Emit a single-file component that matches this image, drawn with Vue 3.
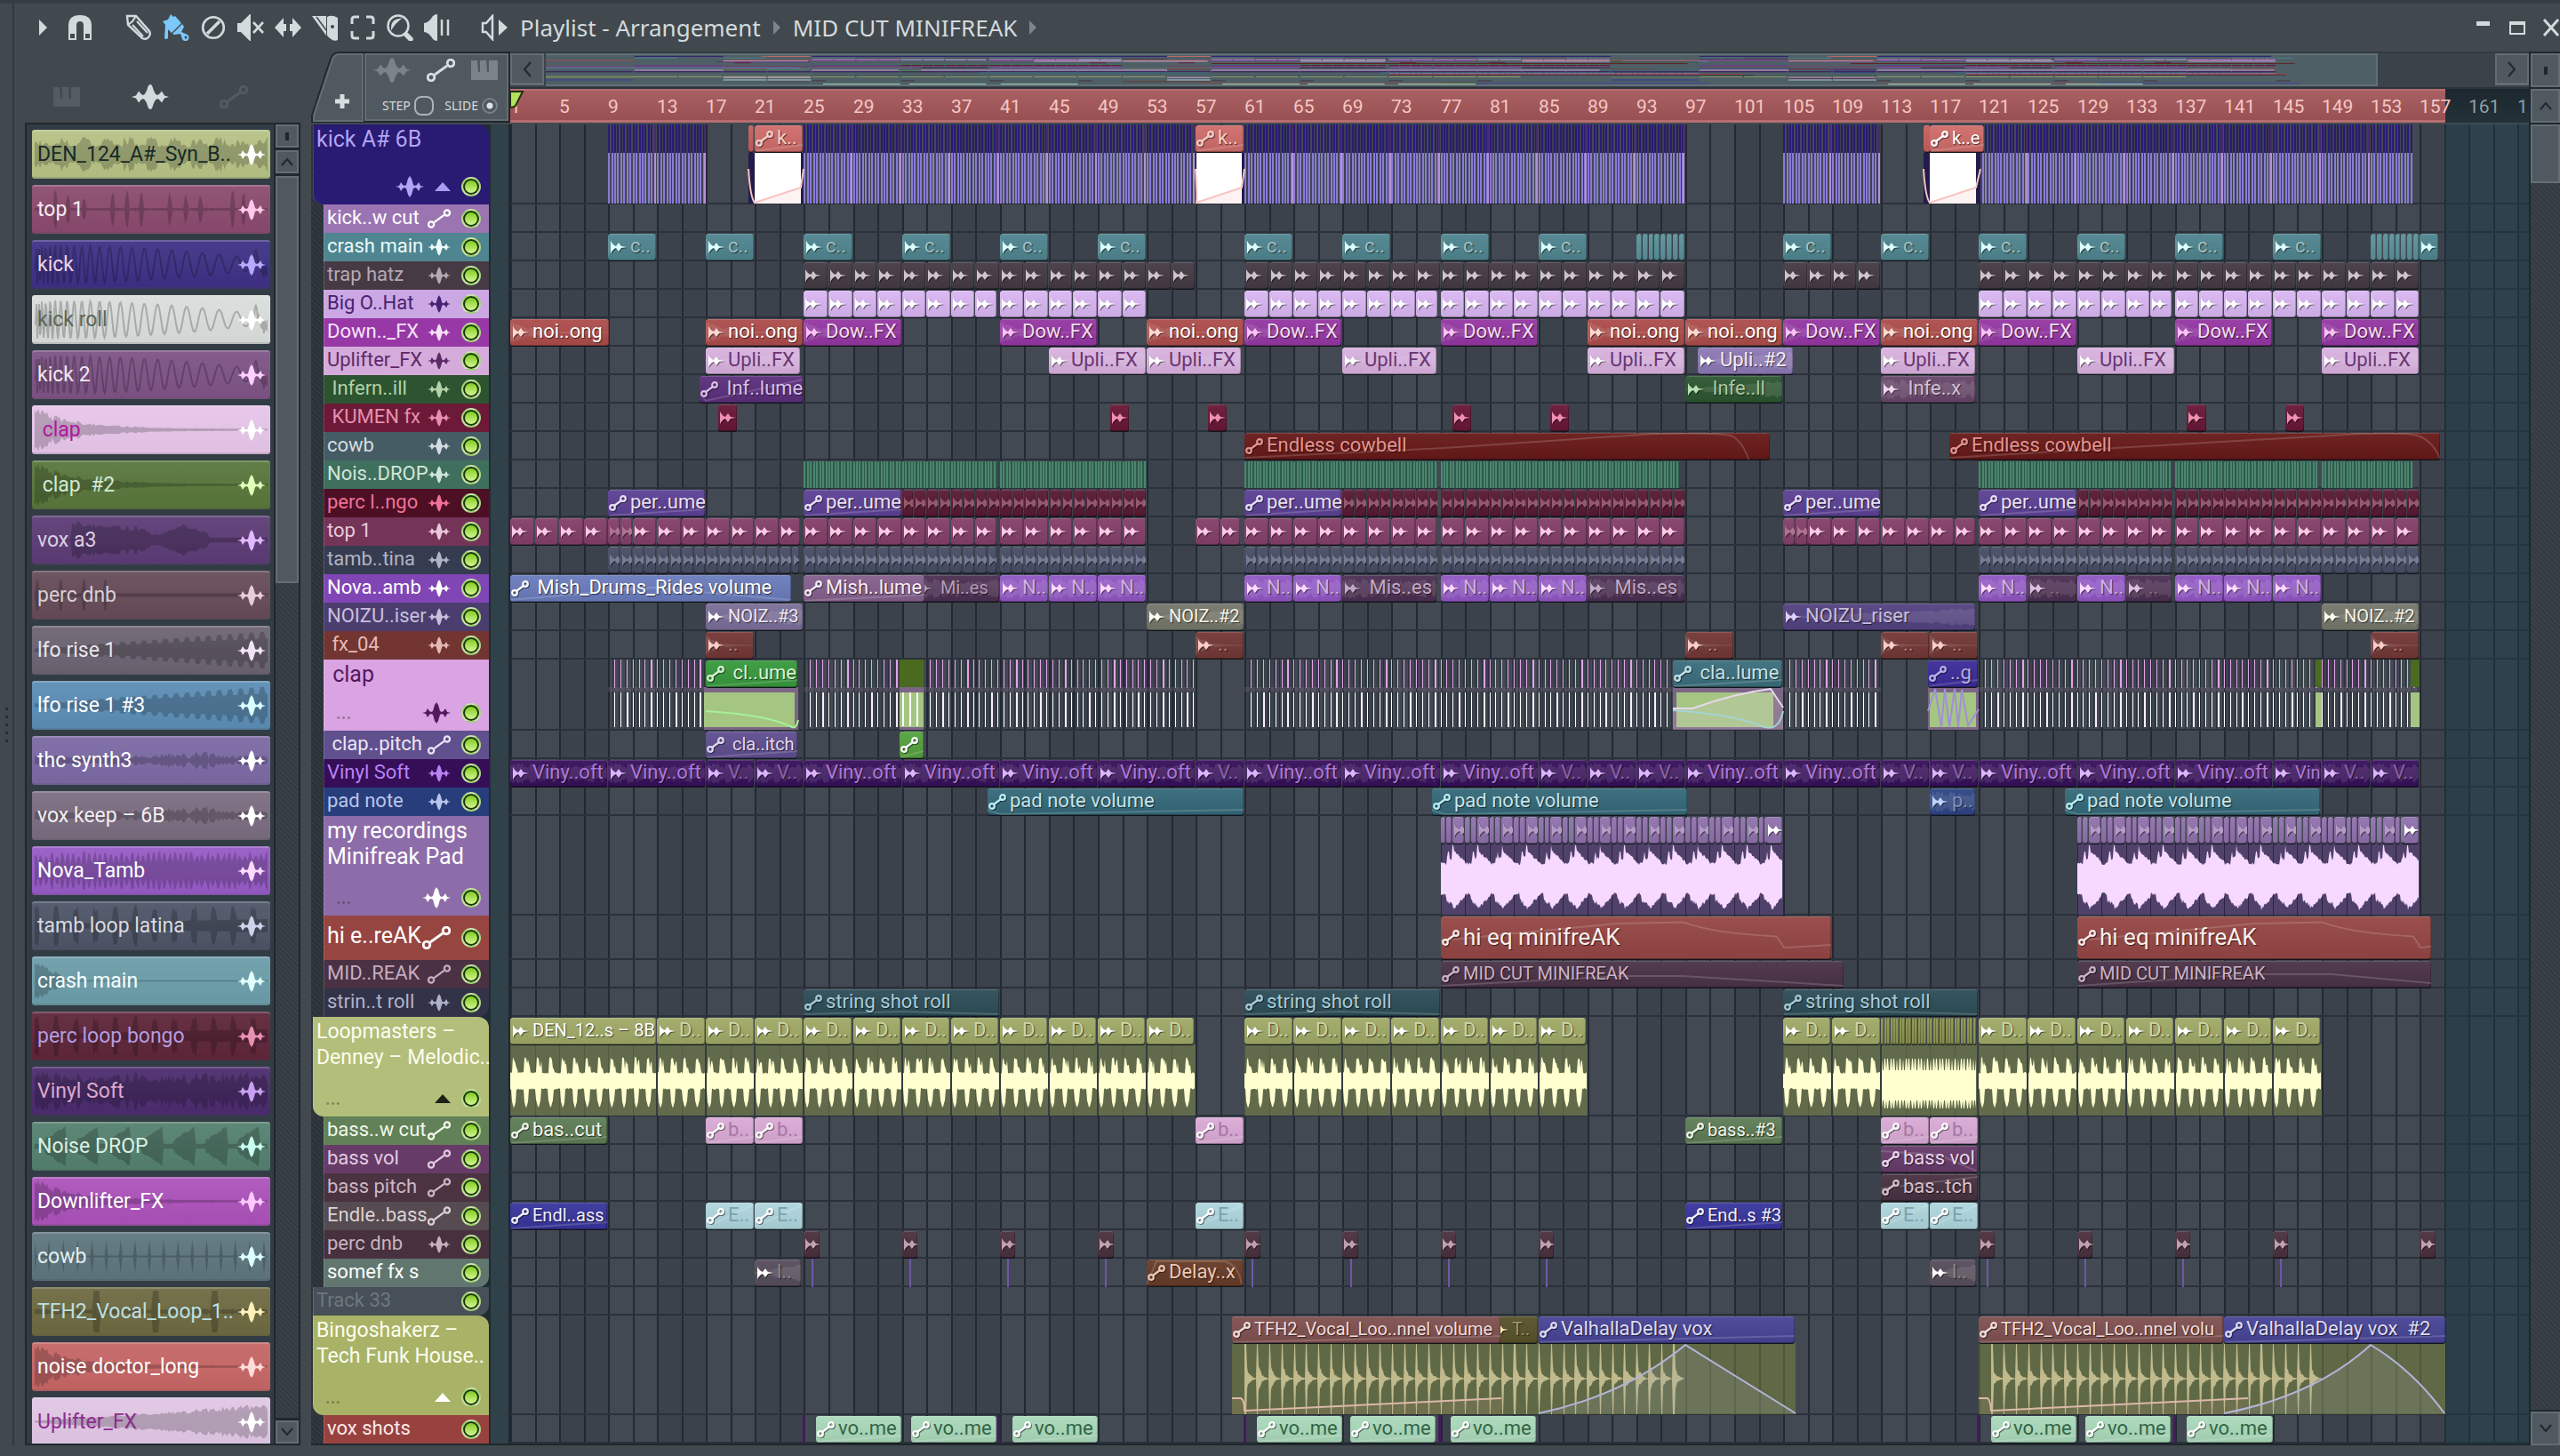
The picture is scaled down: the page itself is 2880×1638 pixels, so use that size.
<script setup>
const BAR = 13.77
const x = (bar) => Math.round((bar - 1) * BAR)
const rand = (n) => {
  const v = Math.sin(n * 127.1 + 11.7) * 43758.5453
  return v - Math.floor(v)
}

/* ---------- waveform helpers ---------- */
function envelope(width, mid, up, down, step = 2) {
  const top = []
  const bottom = []
  for (let i = 0; i <= width; i += step) {
    top.push(`${i} ${(mid - up(i / width, i)).toFixed(1)}`)
    bottom.unshift(`${i} ${(mid + down(i / width, i)).toFixed(1)}`)
  }
  return `M${top.join('L')}L${bottom.join('L')}Z`
}
const shapes = {
  loop: (t, i) => (i % 25 < 13 ? 22 - rand(i) * 12 : 8 + rand(i) * 5),
  spikes: (t, i) => ([22, 36, 54, 86, 102, 118, 150, 168, 184, 220, 232].some((s) => i >= s && i < s + 4) ? 10 + rand(i) * 14 : 1 + rand(i)),
  decay: (t, i) => 24 * Math.exp(-t * 5) * (0.5 + rand(i) * 0.6) + 1,
  short: (t, i) => (t < 0.13 ? 22 * (1 - t * 6) * (0.6 + rand(i) * 0.5) : 0.7),
  grow: (t, i) => 1 + t * 20 * (0.65 + rand(i) * 0.4),
  rise: (t, i) => 2 + t * 17 * (0.7 + (i % 12 < 6 ? 0.5 : 0)),
  vox: (t, i) => (t < 0.16 ? 0.5 : t < 0.5 ? 14 * (1.5 - t * 2) + rand(i) * 8 : t < 0.75 ? Math.max(5, 16 - Math.abs(t - 0.64) * 110) + rand(i) * 4 : 3),
  thin: (t, i) => 2 + rand(i) * (t > 0.5 && t < 0.8 ? 9 : 4),
  noise: (t, i) => 8 + rand(i) * 15,
  dense: (t, i) => (i % 6 < 3 ? 24 - rand(i) * 9 : 6 + 6 * t),
  drums: (t, i) => (i % 22 < 5 ? 16 + rand(i) * 9 : 2 + t * 6),
  blobs: (t, i) => (i % 36 > 10 ? 5 + (i % 36 - 10) * 0.7 + rand(i) * 3 : 3),
  ticks: (t, i) => (i % 16 < 2 ? 20 : 1),
  hits: (t, i) => (i % 66 < 8 && i > 8 ? 25 : 1.5 + rand(i) * 2),
  few: (t, i) => ([2, 28, 54, 78].some((s) => i >= s && i < s + 4) ? 18 : 2),
}
function chirp(width) {
  let d = 'M0 27'
  for (let i = 0; i <= width; i += 1) {
    const t = i / width
    const a = t > 0.93 ? 22 * rand(i) : 23 - t * t * 18
    d += `L${i} ${(27 - a * Math.sin(180 * Math.pow(t + 0.02, 0.42))).toFixed(1)}`
  }
  return d
}

/* ---------- sample picker ---------- */
const nb = '\u00a0'
const samples = [
  ['DEN_124_A#_Syn_B..', '#b6c184', '#182a28', '#ffffff', 'loop'],
  ['top 1', '#8a4a6d', '#f6ecf2', '#ffc8ec', 'spikes'],
  ['kick', '#3d3085', '#ecd4e4', '#b8a8ff', 'sine'],
  ['kick roll', '#d9dddb', '#5c6658', '#ffffff', 'sine'],
  ['kick 2', '#7d5385', '#f2e6f2', '#ffd0ff', 'sine'],
  [nb + 'clap', '#e6c5e9', '#b0189c', '#ffffff', 'decay'],
  [nb + 'clap' + nb + nb + '#2', '#58763b', '#d2ead4', '#e0ffb8', 'decay'],
  ['vox a3', '#5b3b75', '#dccfe4', '#e0b8ff', 'vox'],
  ['perc dnb', '#654b57', '#dacfd3', '#e8ccd8', 'few'],
  ['lfo rise 1', '#6b6371', '#eae6ea', '#f0e4f4', 'rise'],
  ['lfo rise 1 #3', '#5b8cb4', '#ffffff', '#d8ffff', 'rise'],
  ['thc synth3', '#7b69a3', '#ffffff', '#ffffff', 'thin'],
  ['vox keep – 6B', '#7a6c80', '#f2eef2', '#ffffff', 'thin'],
  ['Nova_Tamb', '#955ac5', '#ffffff', '#ffd8ff', 'dense'],
  ['tamb loop latina', '#4d5467', '#dadade', '#ccd4ec', 'drums'],
  ['crash main', '#6b9da9', '#f6ffff', '#e0ffff', 'short'],
  ['perc loop bongo', '#5e2539', '#b49ce0', '#e890b0', 'drums'],
  ['Vinyl Soft', '#4b2b6d', '#dca8cc', '#c8a0f0', 'noise'],
  ['Noise DROP', '#53806f', '#dcf0e0', '#c8fff0', 'blobs'],
  ['Downlifter_FX', '#ab51b9', '#ffffff', '#ffc8ff', 'decay'],
  ['cowb', '#5d757d', '#e2f0f2', '#dcffff', 'ticks'],
  ['TFH2_Vocal_Loop_1..', '#6d6941', '#bce0e4', '#fff0b8', 'hits'],
  ['noise doctor_long', '#c56565', '#ffffff', '#ffdcd8', 'decay'],
  ['Uplifter_FX', '#e0c6e4', '#8c2c8e', '#ffffff', 'grow'],
].map(([name, bg, fg, icon, shape]) => ({
  name, bg, fg, icon,
  line: shape === 'sine',
  wave: shape === 'sine' ? chirp(260) : envelope(260, 27, shapes[shape], shapes[shape]),
}))

/* ---------- clips ---------- */
const clip = (kind, from, to, label, bg, fg, extra = {}) => ({ kind, from, to, label, bg, fg, ...extra })
const auto = (...a) => clip('auto', ...a)
const wav = (...a) => clip('wave', ...a)
const at = (starts, len, make) => starts.map((s) => make(s, s + len))
function slices(ranges, step, bg, fg, kind = 'wave') {
  const out = []
  for (const [a, b] of ranges) {
    for (let s = a; s < b - 0.3; s += step) out.push(clip(kind, s, Math.min(s + step, b), '', bg, fg, { tight: true }))
  }
  return out
}
function bars(ranges, step, w, y, h, shift = 0) {
  let d = ''
  for (const [a, b] of ranges) for (let s = a + shift; s < b - 0.05; s += step) d += `M${x(s)} ${y}h${w}v${h}h-${w}z`
  return d
}
const box = (ranges, y, h) => ranges.map(([a, b]) => `M${x(a)} ${y}H${x(b)}v${h}H${x(a)}z`).join('')
function bodyWave(ranges, period, mid, up, down) {
  return ranges.map(([a, b]) => {
    const top = []
    const low = []
    const x0 = x(a)
    const x1 = x(b) - 1
    for (let i = x0; i <= x1; i++) {
      const p = (((i - x0) / BAR) % period) / period
      top.push(`${i} ${(mid - up(p, i)).toFixed(1)}`)
      low.unshift(`${i} ${(mid + down(p, i)).toFixed(1)}`)
    }
    return `M${top.join('L')}L${low.join('L')}Z`
  }).join('')
}

const kickRanges = [[9, 17], [25, 57], [61, 97], [105, 113], [121, 156.5]]
const clapRanges = [[9, 17], [25, 32.8], [34.8, 57], [61, 96], [105, 113], [121, 156.8]]
const loopRanges = [[1, 13], ...at([13, 17, 21, 25, 29, 33, 37, 41, 45, 49, 53, 61, 65, 69, 73, 77, 81, 85, 105, 109], 4, (a, b) => [a, b]),
  ...at([121, 125, 129, 133, 137, 141, 145], 4, (a, b) => [a, b])]
const recRanges = [[77, 105], [129, 157]]
const whiteBox = (a, b, left, right) => [
  { d: box([[a, b]], 32, 57), fill: '#241b4c' },
  { d: box([[left, right]], 32, 57), fill: '#ffffff' },
  { d: `M${x(left)} 88L${x(right)} 71V89H${x(left)}z`, fill: '#fdf3f2' },
  { d: `M${x(a)} 50Q${x(a) + 2} 82 ${x(left)} 88L${x(right)} 71L${x(b)} 50`, stroke: '#f6c4c0' },
]
const recSlices = () => {
  const out = []
  for (const [a, b] of recRanges) {
    for (let s = a; s < b; s += 2) {
      out.push(clip('plain', s, s + 0.5, '', '#9072ad', '#c0a6d2', { tight: true }))
      out.push(clip('plain', s + 0.5, s + 1, '', '#9072ad', '#c0a6d2', { tight: true }))
      out.push(wav(s + 1 - (s + 2 >= b ? 0.4 : 0), s + 2, '', '#9072ad', s + 2 >= b ? '#ffffff' : '#b49cc6', { tight: true }))
    }
  }
  return out
}

const RED = '#ad4d4b'
const MAG = '#9537a3'
const LIL = '#d9b2e0'
const snug = true
const tracks = [
  {
    name: 'kick A# 6B', h: 90, bg: '#291a73', fg: '#b0a4f4', icon: 'wave', group: true, arrow: '#a89cf0', big: true, roomy: true,
    art: [
      { d: bars(kickRanges, 0.25, 2, 0, 32), fill: '#2a1a74' },
      { d: bars(kickRanges, 0.25, 2, 32, 57), fill: '#8a7bd6' },
      { d: bars(kickRanges, 4, 2, 0, 32, 3.8), fill: '#48296e' },
      { d: bars(kickRanges, 4, 2, 32, 57, 3.8), fill: '#b690d4' },
      ...whiteBox(20.45, 24.95, 20.94, 24.75),
      ...whiteBox(57, 61, 57.1, 60.8),
      ...whiteBox(116.5, 121.1, 117, 120.75),
    ],
    mini: kickRanges,
    clips: [
      clip('plain', 20.45, 21, '', '#c75f5f', '#fff', { tight: true }),
      auto(20.94, 24.95, 'k..', '#cf6c6a', '#f6cfc8'),
      auto(57, 61, 'k..', '#cf6c6a', '#f6cfc8'),
      clip('plain', 116.5, 117.1, '', '#c75f5f', '#fff', { tight: true }),
      auto(117, 121.5, 'k..e', '#cf6c6a', '#ffffff', { snug }),
    ],
  },
  { name: 'kick..w cut', bg: '#9b74b2', fg: '#fff', icon: 'auto', clips: [] },
  {
    name: 'crash main', bg: '#4f8590', fg: '#ecfafa', icon: 'wave',
    clips: [
      ...at([9, 17, 25, 33, 41, 49, 61, 69, 77, 85, 105, 113, 121, 129, 137, 145], 4, (a, b) => wav(a, b, 'c..', '#4f858f', '#a2c0c4', { ic: '#dcffff', wave: 'short' })),
      ...slices([[93, 97], [153, 157]], 0.5, '#5b919a', '#fff', 'plain'),
      wav(157, 158.6, '', '#4f858f', '#dcffff', { tight: true }),
    ],
  },
  { name: 'trap hatz', bg: '#463b45', fg: '#b5a9b4', icon: 'wave', clips: slices([[25, 57], [61, 97], [105, 113], [121, 157]], 2, '#443a44', '#cfc4ce') },
  { name: 'Big O..Hat', bg: '#cba7e3', fg: '#482272', icon: 'wave', clips: slices([[25, 40.8], [41, 53], [61, 76.8], [77, 97], [121, 136.8], [137, 157]], 2, '#dab7f3', '#ffffff') },
  {
    name: 'Down.._FX', bg: '#9838a6', fg: '#f6e2f8', icon: 'wave',
    clips: [
      wav(1, 9.1, 'noi..ong', RED, '#ffffff', { ic: '#ffd8d0', wave: 'decay' }),
      ...at([17, 53, 89, 97, 113], 8, (a, b) => wav(a, b, 'noi..ong', RED, '#ffffff', { ic: '#ffd8d0', wave: 'decay' })),
      ...at([25, 41, 61, 77, 105, 121, 137, 149], 8, (a, b) => wav(a, b, 'Dow..FX', MAG, '#f2dcf4', { ic: '#ffc0f8', wave: 'decay' })),
    ],
  },
  {
    name: 'Uplifter_FX', bg: '#d5abdb', fg: '#5d2a68', icon: 'wave',
    clips: [
      ...at([17, 53, 69, 113], 7.75, (a, b) => wav(a, b, 'Upli..FX', LIL, '#6a3572', { ic: '#fff', wave: 'grow', flat: true })),
      ...at([45, 89, 129, 149], 8, (a, b) => wav(a, b, 'Upli..FX', LIL, '#6a3572', { ic: '#fff', wave: 'grow', flat: true })),
      wav(98, 105.9, 'Upli..#2', '#8d79b5', '#f2ecfa', { ic: '#fff', wave: 'grow' }),
    ],
  },
  {
    name: nb + 'Infern..ill', bg: '#2c5430', fg: '#b4d2a8', icon: 'wave',
    clips: [
      auto(16.45, 24.95, nb + 'Inf..lume', '#5b2f7c', '#d8c0ec', { curve: 'M1 20L6 28L100 4' }),
      wav(97, 105, nb + 'Infe..ll', '#2c5630', '#a8c8a0', { ic: '#b8e0b0', wave: 'grow' }),
      wav(113, 120.75, nb + 'Infe..x', '#67466a', '#d4c0d6', { ic: '#f0d8f0', wave: 'noise' }),
    ],
  },
  { name: nb + 'KUMEN fx', bg: '#6d1a39', fg: '#e68fae', icon: 'wave', clips: at([18, 50, 58, 78, 86, 138, 146], 1.6, (a, b) => wav(a, b, '', '#681736', '#f090b0', { tight: true })) },
  {
    name: 'cowb', bg: '#465c65', fg: '#d4dee2', icon: 'wave',
    clips: [
      auto(61, 104, 'Endless cowbell', '#671918', '#e49490', { curve: 'M0 28L38 17L78 1Q91 -1 93 4Q95 12 96 30' }),
      auto(118.6, 158.7, 'Endless cowbell', '#671918', '#e49490', { curve: 'M0 28L40 15L84 1Q94 -1 96 4Q99 12 100 30' }),
    ],
  },
  {
    name: 'Nois..DROP', bg: '#3f6f5d', fg: '#cfe6da', icon: 'wave', clips: [],
    art: [
      { d: box([[25, 40.8], [41, 53], [61, 76.8], [77, 96.5], [121, 136.7], [137, 148.7], [149, 156.4]], 1, 30), fill: '#2e5848' },
      { d: bars([[25, 40.8], [41, 53], [61, 76.8], [77, 96.5], [121, 136.7], [137, 148.7], [149, 156.4]], 0.25, 2, 1, 30), fill: '#4c8670' },
    ],
    mini: [[25, 40.8], [41, 53], [61, 76.8], [77, 96.5], [121, 136.7], [137, 148.7], [149, 156.4]],
  },
  {
    name: 'perc l..ngo', bg: '#4d0f24', fg: '#f07299', icon: 'wave',
    clips: [
      ...at([9, 25, 61, 105, 121], 8, (a, b) => auto(a, b, 'per..ume', '#5c4195', '#e8e0f6')),
      ...slices([[33, 53], [69, 76.8], [77, 97], [129, 136.8], [137, 157]], 1, '#581a33', '#94596d'),
    ],
  },
  {
    name: 'top 1', bg: '#743457', fg: '#ecc8da', icon: 'wave',
    clips: [
      ...slices([[9, 11], [105, 107]], 1, '#84406a', '#ae7292'),
      ...slices([[1, 9], [11, 24.75], [25, 40.8], [41, 53], [57, 60.7], [61, 76.75], [77, 97], [107, 120.75], [121, 136.8], [137, 157]], 2, '#843f69', '#ffc8e6'),
    ],
  },
  { name: 'tamb..tina', bg: '#363c50', fg: '#b0b4c6', icon: 'wave', clips: slices([[9, 24.7], [25, 40.8], [41, 53], [61, 76.8], [77, 97], [121, 136.8], [137, 157]], 1, '#474d64', '#747d94') },
  {
    name: 'Nova..amb', bg: '#8146b5', fg: '#ffffff', icon: 'wave',
    clips: [
      auto(1, 24, nb + 'Mish_Drums_Rides volume', '#6a7cbd', '#ffffff', { curve: 'M0 28L50 14L100 28' }),
      wav(34, 41, nb + 'Mi..es', '#4b2f52', '#b49abc', { wave: 'noise', snug }),
      auto(25, 34.9, 'Mish..lume', '#84608d', '#f6ecf6'),
      ...at([41, 45, 49, 61, 65, 77, 81, 85, 121, 129, 137, 141, 145], 4, (a, b) => wav(a, b, 'N..', '#9156c5', '#ceb0e2', { ic: '#ffd8ff', wave: 'noise' })),
      wav(69, 76.75, nb + 'Mis..es', '#4b2f52', '#c2a8c8', { wave: 'noise' }),
      wav(89, 97, nb + 'Mis..es', '#4b2f52', '#c2a8c8', { wave: 'noise' }),
      wav(125, 129, '..', '#4b2f52', '#8a6a90', { ic: '#e0c0e0', wave: 'noise' }),
      wav(133, 136.8, '..', '#4b2f52', '#8a6a90', { ic: '#e0c0e0', wave: 'noise' }),
    ],
  },
  {
    name: 'NOIZU..iser', bg: '#4b3e6f', fg: '#c8bfdc', icon: 'wave',
    clips: [
      wav(17, 25, 'NOIZ..#3', '#7b6e99', '#efe8f8', { ic: '#fff', wave: 'grow', snug }),
      ...at([53, 149], 8, (a, b) => wav(a, b, 'NOIZ..#2', '#75776b', '#f4f4e8', { ic: '#fffff0', wave: 'grow', snug })),
      wav(105, 120.75, 'NOIZU_riser', '#534280', '#c8bede', { ic: '#e0d0ff', wave: 'grow' }),
    ],
  },
  { name: nb + 'fx_04', bg: '#723532', fg: '#e6bab4', icon: 'wave', clips: at([17, 57, 97, 113, 117, 153], 4, (a, b) => wav(a, b, '..', '#733735', '#b08480', { ic: '#ffccc8', wave: 'decay' })) },
  {
    name: nb + 'clap', h: 80, bg: '#daa3e2', fg: '#54185e', icon: 'wave', big: true, roomy: true, dots: true,
    art: [
      { d: bars(clapRanges, 0.5, 1, 0, 79, 0.35), fill: '#2b313a' },
      { d: bars(clapRanges, 0.5, 1, 0, 32, 0.5), fill: '#e2a4e8' },
      { d: bars(clapRanges, 0.5, 1, 37, 39, 0.5), fill: '#ffffff' },
      { d: bars(clapRanges, 4, 2, 0, 32, 3.5), fill: '#e2a4e8' },
      { d: bars(clapRanges, 4, 2, 37, 39, 3.5), fill: '#ffffff' },
      { d: bars(clapRanges, 2, 2, 37, 39, 1.5), fill: '#f8eefa' },
      { d: box(clapRanges, 31, 5), fill: '#7c66854d' },
      { d: box([[16.8, 24.5], [32.8, 34.8], [96, 105], [116.8, 121]], 31, 48), fill: '#7c6685' },
      { d: box([[148.5, 149], [156.3, 157], [32.8, 34.8]], 0, 31), fill: '#4a6a1f' },
      { d: box([[16.8, 24.25], [32.8, 34.8], [96.3, 104.2], [117, 120.75], [148.5, 149], [156.3, 157]], 37, 39), fill: '#a5c583' },
      { d: bars([[33, 34.7]], 0.6, 2, 37, 38), fill: '#ffffff' },
      { d: `M${x(17)} 58Q${x(22)} 62 ${x(24)} 76Q${x(24.4)} 78 ${x(24.5)} 68`, stroke: '#a8f098' },
      { d: `M${x(96)} 55H${x(97.6)}Q${x(101)} 38 ${x(104)} 33L${x(105)} 54V78H${x(96)}z`, fill: '#e8d0e833' },
      { d: `M${x(96)} 55H${x(97.6)}Q${x(101)} 38 ${x(104)} 33L${x(105)} 54`, stroke: '#e8d8ea' },
      { d: `M${x(96)} 57Q${x(101)} 62 ${x(103)} 74Q${x(104.6)} 84 ${x(105)} 58`, stroke: '#a4d4d0' },
      { d: `M${x(116.8)} 58L${x(117.4)} 33L${x(117.9)} 76L${x(118.2)} 33L${x(118.6)} 76L${x(119)} 33L${x(119.3)} 76L${x(119.6)} 34L${x(120.1)} 74L${x(121)} 56`, stroke: '#a090d8' },
    ],
    mini: clapRanges,
    clips: [
      auto(17, 24.55, nb + 'cl..ume', '#37993d', '#d8f4d4'),
      auto(96, 105, nb + 'cla..lume', '#3b6e7c', '#c6e2e8'),
      auto(116.8, 121, '..g', '#3b2c99', '#b8b0ec'),
    ],
  },
  {
    name: nb + 'clap..pitch', bg: '#60508e', fg: '#ece6f6', icon: 'auto',
    clips: [auto(17, 24.5, nb + 'cla..itch', '#5f4e90', '#e0d8f2', { snug }), auto(32.8, 34.85, '', '#54a23e', '#ffffff')],
  },
  {
    name: 'Vinyl Soft', bg: '#350e57', fg: '#b982f2', icon: 'wave',
    clips: [
      ...at([1, 9, 25, 33, 41, 49, 61, 69, 77, 97, 105, 121, 129, 137], 8, (a, b) => wav(a, b, 'Viny..oft', '#360f5a', '#ae78dc', { ic: '#dcb4ff', wave: 'noise' })),
      ...at([17, 21, 57, 85, 89, 93, 113, 117, 149, 153], 4, (a, b) => wav(a, b, 'V..', '#360f5a', '#8a62b0', { ic: '#dcb4ff', wave: 'noise' })),
      wav(145, 149, 'Vin', '#360f5a', '#ae78dc', { ic: '#dcb4ff', wave: 'noise', snug }),
    ],
  },
  {
    name: 'pad note', bg: '#283d7b', fg: '#b8c6ea', icon: 'wave',
    clips: [
      ...at([40, 76.3, 128], 20.95, (a, b) => auto(a, b, 'pad note volume', '#35697a', '#c6e4ea', { ic: '#b8f0f4', curve: 'M0 24L5 29L100 24' })),
      wav(117, 120.75, 'p..', '#2e4584', '#7c90c0', { ic: '#c0d4ff', wave: 'noise' }),
    ],
  },
  {
    name: 'my recordings\nMinifreak Pad', h: 112, bg: '#8c6da9', fg: '#fff', icon: 'wave', big: true, roomy: true, dots: true,
    art: [
      { d: box(recRanges, 31, 80), fill: '#4f4169' },
      { d: bars(recRanges, 2, 1, 31, 80), fill: '#2c2442' },
      {
        d: bodyWave(recRanges, 2, 70,
          (p, i) => (Math.abs(p - 0.5) < 0.03 ? 37 : Math.abs(p - 0.32) < 0.03 ? 30 : p < 0.25 ? 15 + rand(i) * 3 : p < 0.5 ? 20 + rand(i) * 5 : 30 - (p - 0.5) * 26 + rand(i) * 3),
          (p, i) => (p < 0.2 ? 16 + rand(i) * 3 : p < 0.5 ? 18 + p * 20 + rand(i) * 5 : 33 - (p - 0.5) * 30 + rand(i) * 4)),
        fill: '#f7d8ff',
      },
    ],
    clips: recSlices(),
  },
  {
    name: 'hi e..reAK', h: 50, bg: '#974541', fg: '#fff', icon: 'auto', big: true,
    clips: [
      auto(77, 109, 'hi eq minifreAK', '#954644', '#fbeeec', { curve: 'M0 17L45 5L62 4Q70 12 86 14L88 22L100 20', large: true }),
      auto(129, 158, 'hi eq minifreAK', '#954644', '#fbeeec', { curve: 'M0 17L50 5L69 4Q78 12 95 14L97 22L100 21', large: true }),
    ],
  },
  {
    name: 'MID..REAK', bg: '#4a3143', fg: '#c6acbf', icon: 'auto',
    clips: [
      auto(77, 110, 'MID CUT MINIFREAK', '#4a3247', '#ccb2c8', { curve: 'M0 28L45 17L60 17L100 28', snug }),
      auto(129, 158, 'MID CUT MINIFREAK', '#4a3247', '#ccb2c8', { curve: 'M0 28L50 15L72 15L100 25', snug }),
    ],
  },
  { name: 'strin..t roll', bg: '#323348', fg: '#b0b2ca', icon: 'wave', last: true, clips: at([25, 61, 105], 16, (a, b) => auto(a, b, 'string shot roll', '#2d4d58', '#a8ccd8', { curve: 'M0 28L50 25L100 28' })) },
  {
    name: 'Loopmasters –\nDenney – Melodic..', h: 112, bg: '#b3be7a', fg: '#fbfdf0', group: true, arrow: '#1c2212', big: true, dots: true,
    art: [
      { d: box([...loopRanges, [113, 120.85]], 31, 80), fill: '#616a4b' },
      { d: bars([[1, 57], [61, 89], [105, 149]], 2, 1, 31, 80), fill: '#525b40' },
      {
        d: bodyWave(loopRanges, 1, 72,
          (p, i) => (p > 0.15 && p < 0.35 ? 27 - rand(i) * 3 : p >= 0.35 && p < 0.6 ? 25 - rand(i) * 12 : 8 + rand(i) * 2),
          (p, i) => (p > 0.1 && p < 0.5 ? 31 - Math.abs(p - 0.3) * 50 : 8 + rand(i) * 2)),
        fill: '#ffffd0',
      },
      { d: bodyWave([[113, 120.85]], 0.25, 72, (p) => (p < 0.5 ? 25 : 12), (p) => (p < 0.5 ? 31 : 22)), fill: '#ffffd0' },
      { d: bars([[13, 57], [65, 89], [109, 113.5], [125, 149]], 4, 2, 31, 80).replace(/M(\d+)/g, (m, n) => `M${n - 1}`), fill: '#343b40' },
    ],
    clips: [
      wav(1, 12.95, 'DEN_12..s – 8B', '#a0aa67', '#ffffff', { ic: '#fff', snug }),
      ...loopRanges.slice(1).map(([a, b]) => wav(a, b - 0.05, 'D..', '#a0aa67', '#d0d6aa', { ic: '#fff' })),
      ...slices([[113, 120.9]], 0.25, '#8d9653', '#fff', 'plain'),
    ],
  },
  {
    name: 'bass..w cut', bg: '#638158', fg: '#f0f8ea', icon: 'auto',
    clips: [
      auto(1, 9, 'bas..cut', '#5e7c56', '#f0f6ec'),
      ...at([17, 21, 57, 113, 117], 4, (a, b) => auto(a, b, 'b..', '#daabd6', '#a678a2', { ic: '#fff', flat: true })),
      auto(97, 105, 'bass..#3', '#5e7c56', '#f0f6ec', { snug }),
    ],
  },
  { name: 'bass vol', bg: '#673b68', fg: '#e2cce2', icon: 'auto', clips: [auto(113, 121, 'bass vol', '#673b69', '#ecd6ec', { curve: 'M0 6L60 10L100 29' })] },
  { name: 'bass pitch', bg: '#4b3342', fg: '#ccb8c4', icon: 'auto', clips: [auto(113, 121, 'bas..tch', '#483141', '#d6c2ce', { curve: 'M0 16L100 3' })] },
  {
    name: 'Endle..bass', bg: '#564b50', fg: '#dcd2d6', icon: 'auto',
    clips: [
      auto(1, 9, 'Endl..ass', '#38359d', '#eeeefa', { snug }),
      ...at([17, 21, 57, 113, 117], 4, (a, b) => auto(a, b, 'E..', '#afd6de', '#7ca2ac', { ic: '#fff', flat: true, curve: 'M0 28L100 2' })),
      auto(97, 105, 'End..s #3', '#38359d', '#eeeefa', { snug }),
    ],
  },
  { name: 'perc dnb', bg: '#48313f', fg: '#c8b2be', icon: 'wave', clips: at([25, 33, 41, 49, 61, 69, 77, 85, 121, 129, 137, 145, 157], 1.35, (a, b) => wav(a, b, '', '#4a303d', '#c0a0b0', { tight: true })) },
  {
    name: 'somef fx s', bg: '#60766f', fg: '#ffffff', last: true,
    art: [{ d: bars([[25, 53], [61, 89], [121, 149]], 8, 2, 0, 32, 0.6), fill: '#6f57a8' }],
    clips: [
      ...at([21, 117], 3.8, (a, b) => wav(a, b, 'l..', '#574d5b', '#8e8492', { ic: '#fff', wave: 'grow' })),
      auto(53, 61, 'Delay..x', '#673b28', '#ecc8b4', { curve: 'M0 28L10 2L80 2Q95 6 98 28' }),
    ],
  },
  { name: 'Track 33', bg: '#475058', fg: '#6e787e', group: true, last: true, clips: [] },
  {
    name: 'Bingoshakerz –\nTech Funk House..', h: 112, bg: '#a9b367', fg: '#fbfdf0', group: true, arrow: '#ffffff', big: true, dots: true,
    art: [
      { d: box([[60, 106], [121, 159.1]], 30, 81), fill: '#606946' },
      { d: bars([[61, 106], [121, 159]], 2, 2, 30, 81), fill: '#4d583b' },
      { d: bodyWave([[61, 97], [122, 149]], 1, 71, (p, i) => (p < 0.15 ? 39 : 18 * Math.exp(-(p - 0.15) * 4) * (0.5 + rand(i) * 0.5)), (p, i) => (p < 0.15 ? 40 : 16 * Math.exp(-(p - 0.15) * 4) * (0.5 + rand(i) * 0.5))), fill: '#c0ba8c' },
      { d: `M${x(60)} 93H${x(60.7)}Q${x(60.95)} 95 ${x(61)} 107L${x(82)} 93V111H${x(60)}z`, fill: '#c8a08a22' },
      { d: `M${x(60)} 93H${x(60.7)}Q${x(60.95)} 95 ${x(61)} 107L${x(82)} 93`, stroke: '#dcb8a8' },
      { d: `M${x(121)} 93H${x(121.7)}Q${x(121.95)} 95 ${x(122)} 107L${x(143)} 93V111H${x(121)}z`, fill: '#c8a08a22' },
      { d: `M${x(121)} 93H${x(121.7)}Q${x(121.95)} 95 ${x(122)} 107L${x(143)} 93`, stroke: '#dcb8a8' },
      { d: `M${x(85)} 110Q${x(92)} 90 ${x(97)} 33L${x(106)} 110`, fill: '#a0a8b02e', stroke: '#b4b4da' },
      { d: `M${x(141)} 110Q${x(148.5)} 90 ${x(153)} 33Q${x(156.5)} 62 ${x(159)} 110`, fill: '#a0a8b02e', stroke: '#b4b4da' },
    ],
    clips: [
      wav(81, 85, 'T..', '#58522a', '#a09a68', { ic: '#fff0b0', snug }),
      auto(60, 82, 'TFH2_Vocal_Loo..nnel volume', '#805150', '#f2dedc', { snug }),
      auto(85, 106, 'ValhallaDelay vox', '#474497', '#dedcf4'),
      auto(121, 141, 'TFH2_Vocal_Loo..nnel volu', '#805150', '#f2dedc', { snug }),
      auto(141, 159.15, 'ValhallaDelay vox' + nb + nb + '#2', '#474497', '#dedcf4'),
    ],
  },
  {
    name: 'vox shots', bg: '#984240', fg: '#fbe8e6',
    art: [{ d: [24.9, 40.8, 60.9, 76.85, 120.85, 136.85].map((b) => `M${x(b)} 0h3v31h-3z`).join(''), fill: '#451a5c' }],
    clips: at([26, 33.75, 42, 62, 69.65, 77.85, 122, 129.7, 138], 7.05, (a, b) => auto(a, b, 'vo..me', '#abdabb', '#336446', { ic: '#fff', flat: true })),
  },
].map((t) => ({ h: 32, art: [], ...t }))

const lanesHeight = tracks.reduce((s, t) => s + t.h, 0)
const LAST = 172
const gridLines = Array.from({ length: LAST / 2 }, (_, i) => `M${x(1 + i * 2)} 0h2v${lanesHeight}h-2z`).join('')
const gridBands = Array.from({ length: LAST / 8 }, (_, i) => `M${x(5 + i * 8)} 0H${x(9 + i * 8)}V${lanesHeight}H${x(5 + i * 8)}z`).join('')
const END = 159.1
const rulerMarks = Array.from({ length: 42 }, (_, i) => 1 + i * 4)

const miniRects = []
tracks.forEach((t, row) => {
  for (const c of t.clips) miniRects.push({ x: c.from - 1, w: c.to - c.from - 0.1, y: row + 1, fill: c.bg })
  for (const [a, b] of t.mini || []) miniRects.push({ x: a - 1, w: b - a, y: row + 1, fill: t.bg })
})

const curveOf = (c) => c.curve || 'M0 29L100 22'
const waveOf = (c) => {
  const w = x(c.to) - x(c.from)
  const f = shapes[c.wave]
  return envelope(w, 15, (t, i) => f(t, i) * 0.5, (t, i) => f(t, i) * 0.5)
}
const clipStyle = (c) => ({ left: x(c.from) + 'px', width: Math.max(2, x(c.to) - x(c.from) - 1) + 'px', '--bg': c.bg, color: c.fg })

const tools = ['pencil', 'brush', 'ban', 'mute', 'slip', 'slice', 'select', 'zoom', 'playback']
</script>

<template>
  <svg class="defs" aria-hidden="true">
    <symbol id="i-wave" viewBox="0 0 42 28"><path d="M0 14L5 12.500L8 7.500L11 11L13 12Q16 11 18 4Q19 0 21 0Q23 0 24 4Q26 11 29 12L31 11L34 7.500L37 12.500L42 14L37 15.500L34 20.500L31 17L29 16Q26 17 24 24Q23 28 21 28Q19 28 18 24Q16 17 13 16L11 17L8 20.500L5 15.500Z" fill="currentColor" /></symbol>
    <symbol id="i-wavesmall" viewBox="0 0 32 24"><path d="M0 12L4 11L6 7L8 10L10 11L12 10L14 3L16 0L18 3L20 10L22 11L24 10L26 7L28 11L32 12L28 13L26 17L24 14L22 13L20 14L18 21L16 24L14 21L12 14L10 13L8 14L6 17L4 13Z" fill="currentColor" /></symbol>
    <symbol id="i-half" viewBox="0 0 18 14"><path d="M0 0L2 3L4 5L6 6L9 2L12 6L18 7L12 8L9 12L6 8L4 9L2 11L0 14Z" fill="currentColor" /></symbol>
    <symbol id="i-auto" viewBox="0 0 32 26"><g fill="none" stroke="currentColor" stroke-width="2.800"><circle cx="5" cy="21" r="3.800" /><circle cx="27" cy="5" r="3.800" /><path d="M9 18L23 8" /></g></symbol>
    <symbol id="i-autoclip" viewBox="0 0 20 18"><g fill="none" stroke="currentColor" stroke-width="2.200"><circle cx="4" cy="14" r="2.800" /><circle cx="16" cy="4" r="2.800" /><path d="M6 12L14 6" /></g></symbol>
    <symbol id="i-piano" viewBox="0 0 30 22"><path d="M0 0H7L8 13H10V0H17L18 13H20V0H30V22H0Z" fill="currentColor" /></symbol>
    <symbol id="i-play" viewBox="0 0 30 30"><path d="M11 6L20 15L11 24Z" fill="currentColor" /></symbol>
    <symbol id="i-magnet" viewBox="0 0 30 30"><path d="M2 29V13Q2 1 15 1Q28 1 28 13V29H19V13Q19 8 15 8Q11 8 11 13V29Z" fill="currentColor" /><path d="M4 22h5v5h-5zM21 22h5v5h-5z" fill="#41494f" /></symbol>
    <symbol id="i-pencil" viewBox="0 0 30 30"><path d="M2 2L12 2L27 19Q29 23 26 26Q23 29 19 27L3 12Z" fill="none" stroke="currentColor" stroke-width="2.400" /><path d="M8 12L20 25M13 8L25 21M3 12L8 8L12 2" fill="none" stroke="currentColor" stroke-width="2.200" /></symbol>
    <symbol id="i-brush" viewBox="0 0 30 30"><path d="M9 0L12 3L14 2L21 10L10 21L6 17V27Q4 29 2 27L3 12L0 8L6 6Z" fill="currentColor" /><path d="M22 11L24 14L21 20L28 23A4 4 0 1 1 22 28L20 22L13 23L11 22Z" fill="currentColor" /><circle cx="26" cy="26" r="1.500" fill="#41494f" /></symbol>
    <symbol id="i-ban" viewBox="0 0 30 30"><g fill="none" stroke="currentColor" stroke-width="2.600"><circle cx="15" cy="15" r="11.800" /><path d="M8 22L22 8" stroke-width="3.600" /></g></symbol>
    <symbol id="i-mute" viewBox="0 0 30 30"><path d="M0 10H4L14 0H15V30H14L4 20H0Z" fill="currentColor" /><path d="M18 9L29 21M29 9L18 21" stroke="currentColor" stroke-width="2.600" /></symbol>
    <symbol id="i-slip" viewBox="0 0 30 30"><path d="M0 15L10 4V11H13V19H10V26ZM30 15L20 4V11H17V19H20V26Z" fill="currentColor" /></symbol>
    <symbol id="i-slice" viewBox="0 0 30 30"><path d="M0 2H16V24Z" fill="currentColor" /><path d="M5 3L16 18" stroke="#41494f" stroke-width="1.500" /><path d="M17 3Q22 0 29 4V29Q24 32 17 24Z" fill="currentColor" /><circle cx="23" cy="14" r="2" fill="#41494f" /></symbol>
    <symbol id="i-select" viewBox="0 0 30 30"><path d="M3 11V6Q3 3 6 3H11M19 3H24Q27 3 27 6V11M27 19V24Q27 27 24 27H19M11 27H6Q3 27 3 24V19" fill="none" stroke="currentColor" stroke-width="3" /></symbol>
    <symbol id="i-zoom" viewBox="0 0 30 30"><circle cx="13" cy="13" r="11.500" fill="none" stroke="currentColor" stroke-width="2.500" /><path d="M6 15Q6 7 14 6Q9 10 6 15Z" fill="currentColor" stroke="currentColor" stroke-width="2" /><path d="M22 23L27 28" stroke="currentColor" stroke-width="5.500" stroke-linecap="round" /></symbol>
    <symbol id="i-playback" viewBox="0 0 30 30"><path d="M0 10Q5 10 10 2Q12 0 15 0V30Q12 30 10 28Q5 20 0 20Z" fill="currentColor" /><path d="M20 6V24M27 6V24" stroke="currentColor" stroke-width="2.500" /></symbol>
    <symbol id="i-speaker" viewBox="0 0 30 30"><path d="M13 2V28L6 20H2V10H6Z" fill="none" stroke="currentColor" stroke-width="2.500" /><path d="M20 6L30 15L20 24Z" fill="currentColor" /></symbol>
    <symbol id="i-up" viewBox="0 0 14 10"><path d="M1 9L7 2L13 9" fill="none" stroke="currentColor" stroke-width="2" /></symbol>
    <symbol id="i-left" viewBox="0 0 10 18"><path d="M9 1L2 9L9 17" fill="none" stroke="currentColor" stroke-width="2" /></symbol>
  </svg>

  <div class="window">
    <header class="toolbar">
      <button class="tool" aria-label="Menu"><svg><use href="#i-play" /></svg></button>
      <button class="tool" aria-label="Snap"><svg><use href="#i-magnet" /></svg></button>
      <div class="toolset">
        <button v-for="t in tools" :key="t" class="tool" :class="{ active: t === 'brush' }" :aria-label="t"><svg><use :href="'#i-' + t" /></svg></button>
      </div>
      <button class="tool" aria-label="Preview"><svg><use href="#i-speaker" /></svg></button>
      <nav class="crumbs">
        <span>Playlist - Arrangement</span><i></i><span>MID CUT MINIFREAK</span><i></i>
      </nav>
      <div class="winbtns">
        <button aria-label="Minimize"><svg viewBox="0 0 20 20"><path d="M2 3h15v5h-15z" fill="currentColor" /></svg></button>
        <button aria-label="Maximize"><svg viewBox="0 0 20 20"><path d="M1 3h18v15h-18zM3 7v9h14v-9z" fill="currentColor" fill-rule="evenodd" /></svg></button>
        <button aria-label="Close"><svg viewBox="0 0 20 20"><path d="M2 1L18 19M18 1L2 19" stroke="currentColor" stroke-width="3" /></svg></button>
      </div>
    </header>

    <div class="main">
      <div class="grip"><b></b><b></b><b></b><b></b><b></b></div>

      <aside class="picker">
        <div class="tabs">
          <button aria-label="Patterns"><svg class="piano"><use href="#i-piano" /></svg></button>
          <button class="on" aria-label="Audio clips"><svg class="wv"><use href="#i-wave" /></svg></button>
          <button aria-label="Automation clips"><svg class="au"><use href="#i-auto" /></svg></button>
        </div>
        <div class="panel">
          <ul class="samples">
            <li v-for="s in samples" :key="s.name">
              <button class="sample" :style="{ '--bg': s.bg, color: s.fg }">
                <svg class="bgwave" viewBox="0 0 260 54" preserveAspectRatio="none">
                  <path :d="s.wave" :class="s.line ? 'stroke' : 'fill'" />
                </svg>
                <span>{{ s.name }}</span>
                <svg class="ic" :style="{ color: s.icon }"><use href="#i-wavesmall" /></svg>
              </button>
            </li>
          </ul>
          <div class="scroll">
            <button class="sb knob" aria-label="Scroll mode"><b></b></button>
            <button class="sb" aria-label="Up"><svg class="chev"><use href="#i-up" /></svg></button>
            <div class="track"><div class="thumb long"></div></div>
            <button class="sb" aria-label="Down"><svg class="chev flip"><use href="#i-up" /></svg></button>
          </div>
        </div>
      </aside>

      <section class="arranger">
        <div class="head">
          <button class="addtab" aria-label="Add track">
            <svg viewBox="0 0 60 80"><path d="M1 80V72L22 8Q25 1 32 1H60V80Z" fill="#50595f" stroke="#1f282d" stroke-width="2" /><path d="M3 78V72L24 9Q26 3 32 3H58V78Z" fill="none" stroke="#646d72" stroke-width="2" /><path d="M27 56h16M35 48v16" stroke="#d8dee0" stroke-width="5" /></svg>
          </button>
          <div class="modes">
            <div class="modeicons">
              <svg class="wv"><use href="#i-wave" /></svg>
              <svg class="au lit"><use href="#i-auto" /></svg>
              <svg class="piano"><use href="#i-piano" /></svg>
            </div>
            <div class="modeopts">
              <label>STEP<input type="checkbox" class="step" /></label>
              <label>SLIDE<input type="radio" class="slide" checked /></label>
            </div>
          </div>
          <div class="nav">
            <div class="minirow">
              <button class="navbtn" aria-label="Scroll left"><svg class="hchev"><use href="#i-left" /></svg></button>
              <div class="minitrack">
                <div class="minimap">
                  <svg viewBox="0 0 165 36" preserveAspectRatio="none">
                    <rect v-for="(r, i) in miniRects" :key="i" :x="r.x" :y="r.y" :width="r.w" height="1" :fill="r.fill" />
                  </svg>
                </div>
              </div>
              <button class="navbtn" aria-label="Scroll right"><svg class="hchev mirror"><use href="#i-left" /></svg></button>
            </div>
            <div class="ruler">
              <div class="song" :style="{ width: x(END) + 'px' }"></div>
              <span v-for="m in rulerMarks" :key="m" :class="{ past: m > END }" :style="{ left: x(m) + 'px' }">{{ m }}</span>
              <svg class="marker" viewBox="0 0 16 20"><path d="M0 1H14L6 17Q4 19 0 19Z" fill="#b4e05c" stroke="#223010" stroke-width="2" /></svg>
            </div>
          </div>
        </div>

        <div class="body">
          <div class="headers">
            <div v-for="t in tracks" :key="t.name" class="th" :class="{ group: t.group, big: t.big, roomy: t.roomy, tall: t.h > 60, last: t.last }" :style="{ height: t.h + 'px', '--bg': t.bg, color: t.fg }">
              <div class="cell">
                <span class="name">{{ t.name }}</span>
                <div class="foot">
                  <span v-if="t.dots" class="dots">...</span>
                  <svg v-if="t.icon" class="ti" :class="t.icon"><use :href="t.icon === 'wave' ? '#i-wavesmall' : '#i-auto'" /></svg>
                  <svg v-if="t.arrow" class="arrow" viewBox="0 0 18 10" :style="{ color: t.arrow }"><path d="M0 10L9 0L18 10Z" fill="currentColor" /></svg>
                  <input type="checkbox" class="led" checked :aria-label="'Enable ' + t.name" />
                </div>
              </div>
            </div>
          </div>
          <div class="lead"></div>
          <div class="lanes">
            <svg class="grid" :height="lanesHeight"><path :d="gridBands" fill="#3b424b" /><path :d="gridLines" fill="#222932" /></svg>
            <div v-for="t in tracks" :key="t.name" class="lane" :class="{ tall: t.h > 60 }" :style="{ height: t.h + 'px' }">
              <svg v-if="t.art.length" class="art">
                <path v-for="(a, i) in t.art" :key="i" :d="a.d" :fill="a.fill || 'none'" :stroke="a.stroke" stroke-width="2" />
              </svg>
              <div v-for="(c, i) in t.clips" :key="i" class="clip" :class="{ tight: c.tight, large: c.large, flat: c.flat, snug: c.snug }" :style="clipStyle(c)">
                <svg v-if="c.wave" class="cw"><path :d="waveOf(c)" /></svg>
                <svg v-if="c.kind === 'auto'" class="curve" viewBox="0 0 100 30" preserveAspectRatio="none"><path :d="curveOf(c)" /></svg>
                <svg v-if="c.kind === 'auto'" class="ca" :style="{ color: c.ic }"><use href="#i-autoclip" /></svg>
                <svg v-if="c.kind === 'wave'" class="ch" :style="{ color: c.ic }"><use href="#i-half" /></svg>
                <span v-if="c.label">{{ c.label }}</span>
              </div>
            </div>
            <div class="after" :style="{ left: x(END) + 'px' }"></div>
          </div>
        </div>
      </section>

      <div class="scroll right">
        <button class="sb knob tallbtn" aria-label="Zoom"><b></b></button>
        <button class="sb tallbtn" aria-label="Up"><svg class="chev"><use href="#i-up" /></svg></button>
        <div class="track"><div class="thumb short"></div></div>
        <button class="sb tallbtn" aria-label="Down"><svg class="chev flip"><use href="#i-up" /></svg></button>
      </div>
    </div>
    <footer></footer>
  </div>
</template>

<style>
body { background: #41494f; }
</style>

<style scoped>
* { box-sizing: border-box; }
.defs { position: absolute; width: 0; height: 0; }
button { border: 0; padding: 0; margin: 0; background: none; color: inherit; font: inherit; }
svg { display: block; }
.window { background: #41494f; color: #d3dadd; font-family: Roboto, "Noto Sans", sans-serif; border-top: 4px solid #343d42; overflow: hidden; }

.toolbar { display: flex; align-items: center; height: 54px; padding-left: 27px; }
.tool { width: 42px; height: 42px; display: grid; place-items: center; }
.tool svg { width: 30px; height: 30px; }
.tool.active { color: #7cc8fa; }
.toolset { display: flex; margin: 0 22px 0 24px; }
.crumbs { display: flex; align-items: center; gap: 14px; margin-left: 8px; font: 26px/30px "Noto Sans", sans-serif; }
.crumbs i { width: 0; border-left: 8px solid #7c858a; border-top: 8px solid transparent; border-bottom: 8px solid transparent; }
.winbtns { display: flex; gap: 18px; margin-left: auto; }
.winbtns svg { width: 20px; height: 20px; }

.main { display: flex; }
.grip { width: 16px; margin-right: 12px; border-right: 2px solid #31393f; display: flex; flex-direction: column; align-items: center; justify-content: center; gap: 6px; margin-top: -54px; }
.grip b { width: 3px; height: 3px; background: #262e33; }

.picker { width: 310px; flex: none; display: flex; flex-direction: column; contain: size; }
.tabs { display: flex; height: 80px; padding-right: 28px; align-items: flex-end; }
.tabs button { flex: 1; height: 56px; padding-bottom: 2px; display: grid; place-items: center; color: #545c61; }
.tabs .on { color: #d3dadd; }
.wv { width: 42px; height: 28px; }
.au { width: 32px; height: 26px; }
.piano { width: 30px; height: 22px; }
.panel { flex: 1; min-height: 0; display: flex; background: #323c44; border: 2px solid #1f282d; border-right: 0; }
.samples { flex: 1; margin: 0; padding: 6px 4px 0 6px; list-style: none; display: flex; flex-direction: column; gap: 7px; overflow: hidden; }
.sample { position: relative; display: flex; align-items: center; justify-content: space-between; width: 100%; height: 55px; padding: 0 5px 0 6px; border-radius: 3px; background: linear-gradient(rgba(255,255,255,.06), rgba(0,0,0,.03)), var(--bg); border-top: 2px solid rgba(255,255,255,.25); border-bottom: 2px solid rgba(0,0,0,.15); font: 23px/30px Roboto, sans-serif; white-space: nowrap; }
.sample span { position: relative; }
.bgwave { position: absolute; inset: 0 3px; width: calc(100% - 6px); height: 100%; }
.bgwave .fill { fill: rgba(0,0,0,.2); }
.bgwave .stroke { fill: none; stroke: rgba(0,0,0,.22); stroke-width: 2; }
.sample .ic { position: relative; width: 32px; height: 24px; }

.scroll { width: 30px; flex: none; display: flex; flex-direction: column; gap: 3px; background: #1f282d; padding: 0 2px; }
.sb { height: 26px; flex: none; background: #50595f; border: 2px solid #646d72; display: grid; place-items: center; color: #1f282d; }
.knob b { width: 4px; height: 9px; background: #1f282d; }
.chev { width: 14px; height: 10px; }
.flip { transform: scaleY(-1); }
.track { flex: 1; background: repeating-linear-gradient(45deg, #333b41 0 2px, #3a4248 2px 4px); }
.thumb { background: #50595f; border: 2px solid #646d72; }
.thumb.long { height: 458px; }
.thumb.short { height: 66px; }
.right { width: 35px; padding-right: 0; padding-top: 2px; gap: 2px; }
.right .tallbtn { height: 38px; }

.arranger { flex: 1; min-width: 0; margin-left: 12px; }
.head { display: flex; height: 82px; padding-bottom: 2px; }
.addtab { width: 60px; height: 80px; }
.addtab svg { width: 60px; height: 80px; }
.modes { width: 164px; border: 2px solid #1f282d; border-left: 0; box-shadow: inset 0 0 0 2px #646d72; background: #50595f; padding: 5px 12px 6px 10px; display: flex; flex-direction: column; justify-content: space-between; }
.modeicons { display: flex; justify-content: space-between; align-items: center; color: #7a8388; }
.modeicons .lit { color: #d8dee0; }
.modeopts { display: flex; justify-content: space-between; padding-left: 10px; font: 14px/22px "Noto Sans", sans-serif; }
.modeopts label { display: flex; align-items: center; gap: 4px; }
.modeopts input { appearance: none; margin: 0; }
.step { width: 22px; height: 22px; border: 2px solid #aab2b4; border-radius: 8px; }
.slide { width: 18px; height: 18px; border: 2px solid #788186; border-radius: 50%; background: radial-gradient(circle, #e0e4e6 0 3px, transparent 4px); }
.nav { flex: 1; min-width: 0; display: flex; flex-direction: column; border-top: 2px solid #323a40; }
.minirow { display: flex; height: 40px; padding-bottom: 2px; background: #3a4349; border-bottom: 2px solid #2b343a; }
.navbtn { width: 38px; background: #50595f; border: 2px solid #646d72; border-bottom-width: 3px; display: grid; place-items: center; color: #1f282d; flex: none; }
.hchev { width: 10px; height: 18px; }
.mirror { transform: scaleX(-1); }
.minitrack { flex: 1; padding-left: 2px; }
.minimap { width: 94%; height: 37px; background: #4e5f66; border: 2px solid #606f75; border-left: 0; }
.minimap svg { width: 100%; height: 100%; }
.ruler { position: relative; height: 38px; background: linear-gradient(#1c272e, #243139); overflow: hidden; font: 21px/38px Roboto, sans-serif; }
.song { height: 38px; background: linear-gradient(#a96063, #985052); border: 2px solid #b76d70; border-width: 2px 0 3px; }
.ruler span { position: absolute; top: 1px; color: #f6c6c2; }
.ruler .past { color: #8f9ea5; }
.marker { position: absolute; left: 0; top: 2px; width: 16px; height: 20px; }

.body { display: flex; border-bottom: 2px solid #1f282d; }
.headers { width: 202px; flex: none; background: #1f2c32; }
.th { padding-left: 14px; background: repeating-linear-gradient(45deg, #2a3238 0 2px, #323a40 2px 4px) left / 14px 100% no-repeat; }
.th.group { padding-left: 2px; }
.cell { position: relative; height: 100%; background: var(--bg); width: 186px; box-shadow: inset 1px 0 rgba(255,255,255,.15); padding: 2px 0 0 4px; display: flex; font-size: 22px; line-height: 26px; }
.group .cell { width: 198px; border-radius: 0 12px 0 12px; }
.last .cell { border-radius: 0 0 12px 0; }
.name { white-space: pre; }
.tall .name { line-height: 29px; }
.big .cell { font-size: 23px; }
.roomy .cell, .big:not(.tall) .cell { font-size: 25px; }
.foot { position: absolute; right: 9px; top: 5px; display: flex; align-items: center; gap: 12px; height: 22px; }
.tall .foot { top: auto; bottom: 9px; left: 14px; justify-content: flex-end; }
.big:not(.tall) .foot { top: 14px; }
.big:not(.tall) .cell { padding-top: 10px; }
.dots { margin-right: auto; font-size: 20px; line-height: 16px; opacity: .35; color: #222; font-weight: 700; }
.ti.wave { width: 26px; height: 20px; }
.ti.auto { width: 26px; height: 22px; }
.big .ti.wave { width: 32px; height: 24px; }
.big:not(.tall) .ti.auto { width: 32px; height: 26px; }
.arrow { width: 18px; height: 10px; }
.led { appearance: none; margin: 0; width: 22px; height: 22px; border-radius: 50%; border: 2px solid rgba(190,205,205,.45); background: linear-gradient(#86d028 3px, #d4f58e 16px); box-shadow: inset 0 0 0 2px #1a3510; }

.lead { width: 22px; flex: none; background: #31414a; border-right: 2px solid #1e2830; }
.lanes { position: relative; flex: 1; min-width: 0; background: #424952; overflow: hidden; }
.grid { position: absolute; left: 0; top: 0; width: 100%; }
.lane { position: relative; box-shadow: inset 0 -2px #2a313a; }
.art { position: absolute; left: 0; top: 0; width: 100%; height: 100%; }
.clip { position: absolute; top: 1px; bottom: 1px; overflow: hidden; display: flex; align-items: center; padding-left: 3px; border-radius: 3px; background: linear-gradient(rgba(255,255,255,.05), rgba(0,0,0,.07)), var(--bg); box-shadow: inset 0 1px rgba(255,255,255,.15), inset 0 -1px rgba(0,0,0,.3), inset -1px 0 rgba(0,0,0,.25), 0 1px #12161c; font-size: 22px; line-height: 26px; white-space: nowrap; text-shadow: 1px 1px 1px rgba(0,0,0,.6); }
.clip.flat { text-shadow: none; }
.clip.large { font-size: 26px; }
.clip.snug { font-size: 20px; }
.tall .clip { bottom: auto; height: 30px; }
.clip span { position: absolute; left: 25px; top: 1px; }
.clip.large span { top: 10px; }
.ca { width: 20px; height: 18px; margin-left: -2px; flex: none; filter: drop-shadow(1px 1px 0 rgba(0,0,0,.5)); }
.ch { position: relative; width: 18px; height: 14px; flex: none; filter: drop-shadow(1px 1px 0 rgba(0,0,0,.5)); }
.tight .ch { margin-left: -1px; }
.cw, .curve { position: absolute; left: 0; top: 0; width: 100%; height: 100%; }
.cw path { fill: rgba(255,255,255,.1); }
.curve path { fill: none; stroke: rgba(255,255,255,.16); stroke-width: 2; vector-effect: non-scaling-stroke; }
.after { position: absolute; top: 0; bottom: 0; right: 0; background: rgba(26,60,72,.5); }
footer { height: 14px; border-bottom: 2px solid #31393f; }
</style>
